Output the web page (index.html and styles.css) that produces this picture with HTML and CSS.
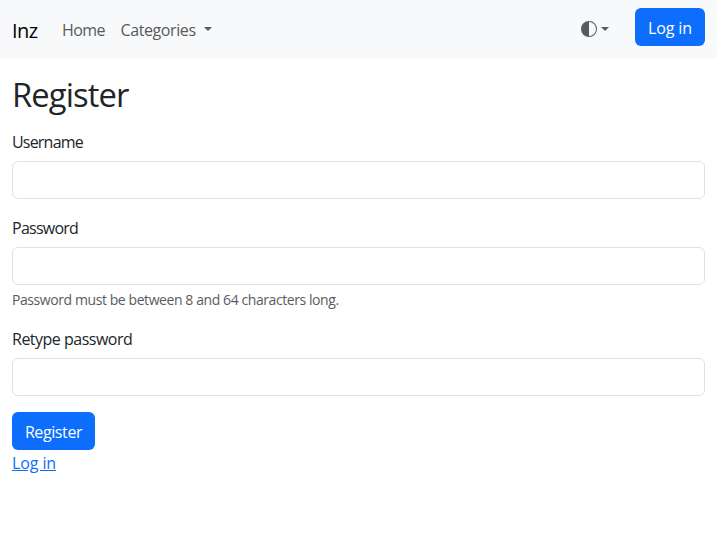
FILE: index.html
```html
<!DOCTYPE html>
<html lang="en">
<head>
<meta charset="utf-8">
<title>Register</title>
<link rel="stylesheet" href="styles.css">
</head>
<body>
<nav class="navbar">
  <a class="brand">Inz</a>
  <a class="nav-link home">Home</a>
  <a class="nav-link categories"><span>Categories</span><i class="caret"></i></a>
  <a class="theme">
    <svg width="16" height="16" viewBox="0 0 16 16" fill="currentColor"><path d="M8 15A7 7 0 1 0 8 1v14zm0 1A8 8 0 1 1 8 0a8 8 0 0 1 0 16z"/></svg>
    <i class="caret"></i>
  </a>
  <a class="btn login">Log in</a>
</nav>
<main>
  <h1>Register</h1>
  <form>
    <div class="field">
      <label class="l-user" for="username">Username</label>
      <input id="username" type="text">
    </div>
    <div class="field">
      <label class="l-pass" for="password">Password</label>
      <input id="password" type="password">
      <div class="hint">Password must be between 8 and 64 characters long.</div>
    </div>
    <div class="field">
      <label class="l-retype" for="retype">Retype password</label>
      <input id="retype" type="password">
    </div>
    <button class="btn register" type="button">Register</button>
  </form>
  <a class="link" href="#">Log in</a>
</main>
</body>
</html>
```
FILE: styles.css
```css
* { box-sizing: border-box; }
body {
  margin: 0;
  font: 16px/24px "Open Sans", "Noto Sans", sans-serif;
  letter-spacing: -0.3px;
  color: #212529;
  background: #fff;
}
.navbar {
  display: flex;
  align-items: center;
  height: 58px;
  padding: 0 12px;
  background: #f8f9fb;
  white-space: nowrap;
}
.brand { width: 50px; font-size: 20px; line-height: 30px; color: #000; padding-top: 3px; letter-spacing: -0.5px; }
.nav-link { color: #595a5b; padding-top: 2px; }
.home { width: 58.5px; letter-spacing: -0.6px; }
.categories { display: flex; letter-spacing: -0.4px; }
.categories span { width: 83.5px; }
.caret {
  width: 0;
  height: 0;
  border-top: 4.8px solid;
  border-left: 4.8px solid transparent;
  border-right: 4.8px solid transparent;
}
.categories .caret { margin-top: 9px; }
.theme { display: flex; align-items: center; gap: 4px; margin-left: auto; margin-right: 26px; color: #595a5b; }
.btn {
  display: block;
  height: 38px;
  padding: 8px 0 6px;
  border: 0;
  border-radius: 6px;
  background: #0d6efd;
  color: #fff;
  font: inherit;
  text-align: center;
}
.login { width: 70px; align-self: flex-start; margin-top: 8px; letter-spacing: -0.1px; }
.register { width: 83px; letter-spacing: -0.4px; }
main { padding: 17px 12px 0; }
h1 { margin: 0 0 16px; font-size: 32.75px; line-height: 39.3px; font-weight: 400; letter-spacing: -0.9px; }
.field { margin-bottom: 16px; }
label { display: block; margin-bottom: 7px; }
.l-user { letter-spacing: -0.8px; }
.l-pass { letter-spacing: -0.75px; }
.l-retype { letter-spacing: -0.5px; }
.field + .field label { padding-top: 1px; }
input {
  display: block;
  width: 100%;
  height: 38px;
  padding: 6px 12px;
  border: 1px solid #dee2e6;
  border-radius: 6px;
  background: #fff;
  font: inherit;
}
.hint { margin-top: 4px; font-size: 14px; line-height: 21px; letter-spacing: -0.42px; color: #595c5f; }
.link { display: inline-block; padding-top: 1px; letter-spacing: -0.1px; color: #0d6efd; text-decoration: underline; }
```
